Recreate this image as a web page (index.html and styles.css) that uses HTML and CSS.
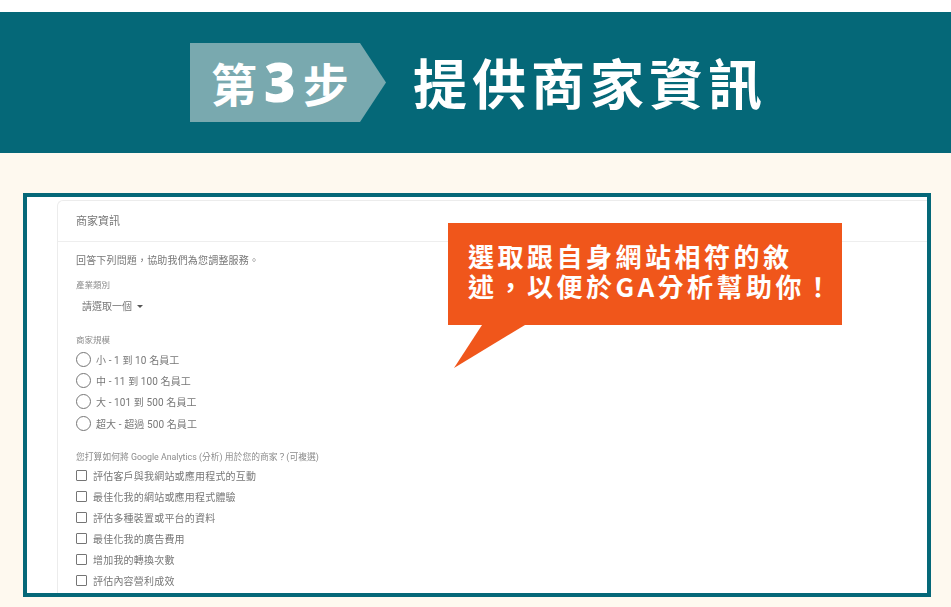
FILE: index.html
```html
<!DOCTYPE html>
<html lang="zh-Hant">
<head>
	<meta charset="UTF-8">
	<title>第3步 提供商家資訊</title>
	<link rel="stylesheet" href="styles.css">
</head>
<body>
	<header class="banner">
		<div class="step">第<b>3</b>步</div>
		<h1 class="title">提供商家資訊</h1>
	</header>
	<div class="shot">
		<div class="card">
			<div class="card-head">商家資訊</div>
			<div class="card-body">
				<p class="intro">回答下列問題，協助我們為您調整服務。</p>
				<p class="label">產業類別</p>
				<div class="select">請選取一個<span class="caret"></span></div>
				<p class="label label-size">商家規模</p>
				<ul class="radios">
					<li><span class="radio"></span>小 - 1 到 10 名員工</li>
					<li><span class="radio"></span>中 - 11 到 100 名員工</li>
					<li><span class="radio"></span>大 - 101 到 500 名員工</li>
					<li><span class="radio"></span>超大 - 超過 500 名員工</li>
				</ul>
				<p class="label label-use">您打算如何將 Google Analytics (分析) 用於您的商家？(可複選)</p>
				<ul class="checks">
					<li><span class="check"></span>評估客戶與我網站或應用程式的互動</li>
					<li><span class="check"></span>最佳化我的網站或應用程式體驗</li>
					<li><span class="check"></span>評估多種裝置或平台的資料</li>
					<li><span class="check"></span>最佳化我的廣告費用</li>
					<li><span class="check"></span>增加我的轉換次數</li>
					<li><span class="check"></span>評估內容營利成效</li>
				</ul>
			</div>
		</div>
		<div class="callout">
			<p>選取跟自身網站相符的敘<br>述，以便於GA分析幫助你！</p>
			<svg class="tail" width="72" height="44" viewBox="0 0 72 44"><polygon points="28,0 71,0 0,43" fill="#f0561b"/></svg>
		</div>
	</div>
</body>
</html>
```

FILE: styles.css
```css
* {
	margin: 0;
	padding: 0;
	list-style: none;
	box-sizing: border-box;
}
html {
	background: #fff;
}
body {
	height: 607px;
	overflow: hidden;
	padding-top: 12px;
	font-family: "Roboto", "Noto Sans CJK TC", sans-serif;
	background: linear-gradient(#fff 12px, #fef9ef 12px);
}
.banner {
	height: 141px;
	padding: 31px 0 0 190px;
	display: flex;
	background: #056878;
	color: #fff;
}
.step {
	width: 196px;
	height: 79px;
	padding-left: 21px;
	font: 700 46px/79px "Noto Sans CJK TC", sans-serif;
	background: #79a9af;
	clip-path: polygon(0 0, 170px 0, 196px 50%, 170px 100%, 0 100%);
}
.step b {
	margin: 0 7px;
	font-family: "Open Sans", sans-serif;
	font-weight: 800;
	font-size: 54px;
	line-height: 0;
}
.title {
	margin: -1px 0 0 27px;
	font: 700 54px/79px "Noto Sans CJK TC", sans-serif;
	letter-spacing: 5px;
}
.shot {
	position: relative;
	width: 908px;
	height: 404px;
	margin: 40px 0 0 23px;
	padding: 3px 0 0 30px;
	border: 4px solid #056878;
	background: #fff;
	overflow: hidden;
}
.card {
	height: 420px;
	border: 1px solid #ececec;
	border-radius: 6px 0 0 0;
	border-right: 0;
	color: #777;
	filter: blur(0.5px);
}
.card-head {
	height: 41px;
	padding-left: 18px;
	font-size: 11px;
	line-height: 42px;
	border-bottom: 1px solid #eee;
}
.card-body {
	padding: 11px 0 0 18px;
	font-size: 10px;
}
.intro {
	line-height: 16px;
	letter-spacing: 0.17px;
}
.label {
	margin-top: 9px;
	font-size: 8.5px;
	line-height: 14px;
	color: #8c8c8c;
}
.select {
	margin: 7px 0 0 6px;
	line-height: 16px;
}
.caret {
	display: inline-block;
	margin: 0 0 1px 5px;
	border: 3px solid transparent;
	border-top: 3px solid #555;
	border-bottom: 0;
	vertical-align: middle;
}
.label-size {
	margin-top: 18px;
}
.radios {
	margin-top: 2px;
}
.radios li {
	display: flex;
	align-items: center;
	height: 21.2px;
	letter-spacing: 0.1px;
}
.radio {
	width: 15px;
	height: 15px;
	margin-right: 5px;
	border: 1.5px solid #757575;
	border-radius: 50%;
}
.label-use {
	margin-top: 16px;
	font-size: 8.8px;
}
.checks {
	margin-top: 1px;
}
.checks li {
	display: flex;
	align-items: center;
	height: 21.1px;
	letter-spacing: 0.2px;
}
.check {
	width: 11px;
	height: 11px;
	margin-right: 6px;
	border: 1.5px solid #757575;
	border-radius: 1px;
}
.callout {
	position: absolute;
	left: 421px;
	top: 26px;
	width: 394px;
	height: 102px;
	padding: 18px 0 0 20px;
	background: #f0561b;
	color: #fff;
}
.callout p {
	font: 700 26px/30px "Noto Sans CJK TC", sans-serif;
	letter-spacing: 3.5px;
	white-space: nowrap;
}
.tail {
	position: absolute;
	left: 6px;
	top: 100%;
	display: block;
}
```
